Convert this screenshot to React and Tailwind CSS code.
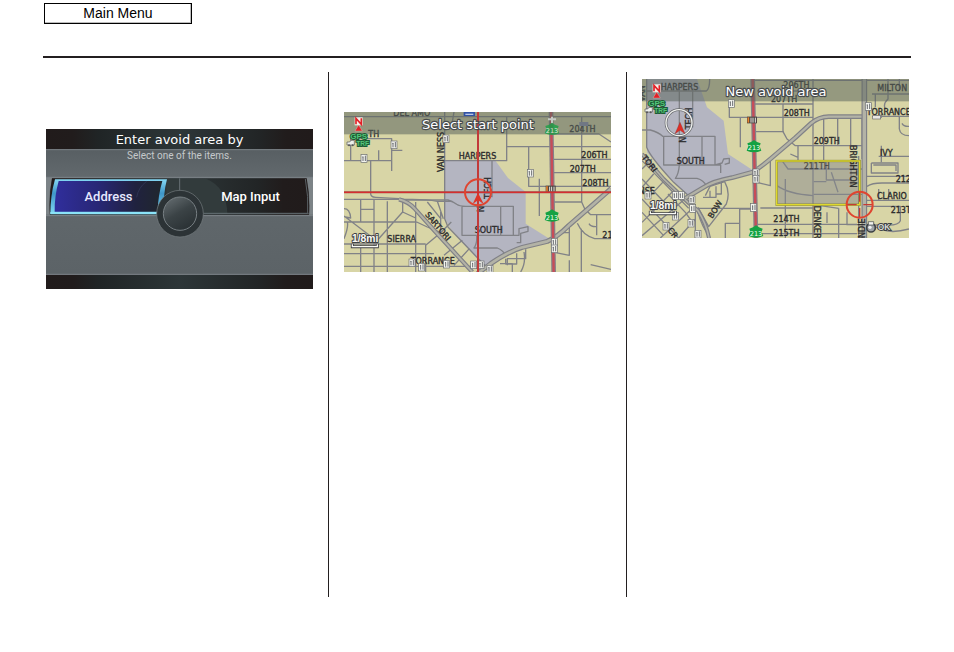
import React from "react";

const MAP_FONT = "font-['Liberation_Sans',Arial,sans-serif] font-bold";
const LABEL_FONT = "font-['DejaVu_Sans',Verdana,sans-serif]";

function Roads({ d, width = 4, color = "#818287" }) {
  return <path d={d} fill="none" stroke={color} strokeWidth={width} strokeLinejoin="round" />;
}

/* Wide road with a pale centre */
function MainRoad({ d, width = 13 }) {
  return (
    <>
      <Roads d={d} width={width} color="#808187" />
      <Roads d={d} width={width - 7} color="#b3b3a6" />
    </>
  );
}

function Label({ x, y, rotate = 0, children }) {
  return (
    <text
      x={x}
      y={y}
      transform={`rotate(${rotate} ${x} ${y})`}
      className={`${LABEL_FONT} text-[24px]`}
      fill="#2b2a2c"
      stroke="#2b2a2c"
      strokeWidth="1"
    >
      {children}
    </text>
  );
}

function Title({ x, y, children }) {
  return (
    <text
      x={x}
      y={y}
      textAnchor="middle"
      className={`${LABEL_FONT} text-[39px]`}
      fill="#ffffff"
      stroke="#484c4e"
      strokeWidth="7"
      strokeLinejoin="round"
      paintOrder="stroke"
    >
      {children}
    </text>
  );
}

/* Traffic incident marker */
function Marker({ x, y }) {
  return (
    <g transform={`translate(${x} ${y})`}>
      <rect x="-9" y="-11" width="18" height="23" fill="#f3f4ef" stroke="#6a6d70" strokeWidth="2" />
      <path d="M-3 -5V8M4 -8V8M-5 -4H-2" stroke="#6a6d70" strokeWidth="3" fill="none" />
    </g>
  );
}

function Construction({ x, y }) {
  return (
    <g transform={`translate(${x} ${y})`}>
      <rect x="-15" y="-10" width="30" height="20" fill="#4a4340" />
      <path d="M-11 -8V8" stroke="#e8812c" strokeWidth="5" />
      <path d="M-3 -7V8M3 -7V8M10 -7V8" stroke="#e9e9e4" strokeWidth="3" />
    </g>
  );
}

function Shield({ x, y, dim }) {
  return (
    <g transform={`translate(${x} ${y})`} opacity={dim ? 0.75 : 1}>
      <path d="M0 -20L9 -14L20 -10L17 -1L22 12Q0 22 -22 12L-17 -1L-20 -10L-9 -14Z" fill="#15a243" />
      <text y="11" textAnchor="middle" className={`${LABEL_FONT} text-[20px]`} fill="#f2fff2">
        213
      </text>
    </g>
  );
}

/* Compass, satellite and traffic status */
function Status({ x, y }) {
  return (
    <g transform={`translate(${x} ${y})`} className={MAP_FONT}>
      <rect x="-12" y="-34" width="24" height="24" fill="#f6efe9" />
      <path d="M-8 -13V-31L8 -13V-31" fill="none" stroke="#e32027" strokeWidth="5" />
      <path d="M0 -11L11 7H-11Z" fill="#e32027" stroke="#f0d8d0" strokeWidth="1" />
      <g fill="#54c47a" stroke="#1c5a33" strokeWidth="6" paintOrder="stroke" textAnchor="middle">
        <text x="0" y="30" className="text-[24px]">GPS</text>
        <text x="12" y="53" className="text-[20px]">TRF</text>
      </g>
      <path d="M-35 40H-27L-23 35H-13V49H-35Z" fill="#edf0ec" stroke="#555" strokeWidth="2" />
      <circle cx="-29" cy="50" r="3" fill="#555" />
      <circle cx="-18" cy="50" r="3" fill="#555" />
    </g>
  );
}

function Scale({ x, y }) {
  return (
    <g transform={`translate(${x} ${y})`}>
      <text
        className={`${MAP_FONT} text-[31px]`}
        fill="#fafaf5"
        stroke="#404246"
        strokeWidth="6"
        strokeLinejoin="round"
        paintOrder="stroke"
      >
        1/8mi
      </text>
      <path d="M1 4V13H76V4" fill="none" stroke="#404246" strokeWidth="9" />
      <path d="M1 6V13H76V6" fill="none" stroke="#fafaf5" strokeWidth="4" />
    </g>
  );
}

function StartMap() {
  return (
    <svg viewBox="0 0 801 480" className="block w-full" role="img" aria-label="Select start point">
      <rect width="801" height="480" fill="#d8d5a6" />
      <path
        d="M303 147H455L492 198L545 240V335L622 384L510 412L420 465L375 412L320 350L303 320Z"
        fill="#b4b5c1"
      />
      <Roads d="M0 14H801M302 0V320L312 345L376 412L430 468M0 146H143M20 146V80H143V177M143 115H175M104 115V146M80 148V240Q78 256 95 256L165 260L185 264H312Q330 270 338 277Q346 283 365 283H508V370H354V283M330 0L325 30M303 146H488V14M488 104H801M554 104V223H801M713 12V270H630M630 142H801M630 182H801M620 66H765L801 90M444 148V256M586 200V312M470 283V370M508 370H525V350L552 344V358L530 364V392H518M398 370Q400 395 390 408H460Q478 415 486 432M713 270L722 290L740 308H801" />
      <Roads d="M0 262H205M50 262V330M90 262V480M50 292H90M0 330H218M130 268V480M176 264V300L215 318M215 270V480M0 396H245M0 425H270M0 463H400M50 400V480M10 330Q14 345 0 380M0 290Q18 290 20 318L0 314M0 312L90 380M205 262Q250 262 280 268L298 320M250 270L292 322M280 268H325M322 330L290 362L245 400V480M355 385L300 430M290 362V300M376 410L330 460M218 330L250 345L290 362M176 300L90 396M676 342V430L635 422M676 362H648M712 350V480M700 334Q716 370 752 380H801M735 335Q740 345 758 344M758 308V370M676 445V480M740 458L801 472M545 412V440H490V460M485 440V456H518V424M468 455H505V480M540 420Q546 455 530 480" />
      <MainRoad width={13} d="M165 262Q195 270 212 290L275 360L330 420L385 480" />
      <MainRoad width={15} d="M400 485L440 455Q490 420 535 406L610 388Q640 375 675 340L750 275L801 230" />
      <path d="M621 0L629 480" stroke="#858188" strokeWidth="14" />
      <path d="M621 0L629 480" stroke="#c84c58" strokeWidth="7" />

      <Label x={148} y={13}>DEL AMO</Label>
      <Label x={73} y={76}>TH</Label>
      <Label x={676} y={59}>204TH</Label>
      <rect width="801" height="67" fill="#5c665e" fillOpacity=".56" />
      <rect x="359" y="0" width="34" height="12" fill="#3152a5" />
      <path d="M364 7H388" stroke="#b9c6e4" strokeWidth="4" />
      <Label x={300} y={180} rotate={-90}>VAN NESS</Label>
      <Label x={344} y={142}>HARPERS</Label>
      <Label x={712} y={139}>206TH</Label>
      <Label x={677} y={180}>207TH</Label>
      <Label x={715} y={221}>208TH</Label>
      <Label x={421} y={300} rotate={-90}>N</Label>
      <Label x={440} y={260} rotate={-90}>TECH</Label>
      <Label x={392} y={364}>SOUTH</Label>
      <Label x={242} y={308} rotate={50}>SARTORI</Label>
      <Label x={130} y={390}>SIERRA</Label>
      <Label x={200} y={456}>TORRANCE</Label>
      <Label x={775} y={379}>21</Label>

      <Marker x={150} y={98} />
      <Marker x={60} y={139} />
      <Marker x={306} y={80} />
      <Marker x={559} y={183} />
      <rect x="706" y="30" width="27" height="12" fill="#707784" />
      <path d="M612 22H636M624 14V34" stroke="#c5cac4" strokeWidth="6" />
      <Marker x={631} y={390} />
      <Marker x={631} y={410} />
      <Marker x={204} y={452} />
      <Marker x={233} y={465} />
      <Marker x={308} y={456} />
      <Marker x={389} y={458} />
      <Marker x={411} y={458} />
      <Marker x={438} y={471} />
      <Shield x={624} y={52} dim />
      <Shield x={624} y={312} />
      <Construction x={620} y={231} />

      <path d="M402 0V480M0 241H801" stroke="#a94a46" strokeWidth="6" />
      <path d="M402 0V480M0 241H801" stroke="#dc2a2c" strokeWidth="3" />
      <circle cx="402" cy="241" r="39" fill="none" stroke="#df4530" strokeWidth="6" />
      <path d="M402 242L419 276L402 265L386 276Z" fill="#df3427" />
      <Status x={44} y={50} />
      <Scale x={24} y={391} />
      <Title x={402} y={51}>Select start point</Title>
    </svg>
  );
}

function AreaMap() {
  return (
    <svg viewBox="0 0 801 477" className="block w-full" role="img" aria-label="New avoid area">
      <rect width="801" height="477" fill="#d8d5a6" />
      <path
        d="M12 0H165L195 85L245 125L258 225L335 275L225 302L140 352L95 310L15 220Z"
        fill="#b4b5c1"
      />
      <Roads d="M14 0V205Q25 235 95 310L145 355M14 36H193Q203 30 203 0M112 36V172M152 36V145M0 153H25Q50 160 62 172H219V258H65V172M112 172V258M180 172V258M219 258H236V282M219 258L240 252L245 240L262 238V252L248 256M112 258Q110 285 100 298H165Q185 303 194 322M262 70V115H333M295 115V205M333 75H513M333 115H513M340 158H425M385 240V320L345 310" />
      <Roads d="M345 36H513M333 4H801M423 75V158L435 180L460 200H660M468 200V245M513 0V477M545 113V245M587 113V200M626 113V200M660 113V240M690 45H801M738 0V60Q722 75 730 90M700 45V85M772 0V36M695 115H718V104M772 112V150Q775 170 801 170M780 133Q785 143 801 142M710 232H801M718 200V250M445 225L468 235M690 112H801" />
      <Roads d="M420 245L438 270H660M430 300V477M355 387H513M405 320Q440 345 513 350M515 346H660M553 245V303H628M515 308H553M568 280L588 340M627 245V320M345 436H645M345 464H645M555 400V432M535 380L590 388M590 388V477M615 400V437H680M688 252H768V282H688V252M694 258H762V276M675 292H801M675 322Q690 312 720 312H801M710 330V362M740 330V362M675 364H801M675 382H775V425Q770 438 740 438H685M690 436Q730 470 801 450M293 390V477M345 390H293M250 477V433H293" />
      <Roads d="M190 350L204 322L248 308Q266 340 253 375L200 443L168 385M183 355H222V322M204 335V355M238 312V345H222M168 388H333M0 245L140 388M0 300L110 415M0 360L65 430L110 477M0 400L65 470M0 430L90 340M0 470L140 350M55 477L160 380M110 477L160 420M35 285L0 325M62 310L25 350M168 400Q178 440 205 477M160 395V477M0 270L30 240M78 345L130 400L155 435" />
      <MainRoad width={12} d="M0 225L65 300L140 372L168 395Q193 435 201 477" />
      <MainRoad width={14} d="M130 358L183 326Q215 306 270 296L333 279Q355 265 385 240L460 176L508 132Q530 114 560 113H672" />
      <MainRoad width={17} d="M667 0V477" />
      <Roads d="M650 231V477" />
      <path d="M332 0L342 477" stroke="#858188" strokeWidth="14" />
      <path d="M332 0L342 477" stroke="#c84c58" strokeWidth="7" />

      <Label x={56} y={34}>HARPERS</Label>
      <Label x={424} y={28}>206TH</Label>
      <Label x={387} y={70}>207TH</Label>
      <Label x={706} y={36}>MILTON</Label>
      <Label x={9} y={68} rotate={-90}>VAN</Label>
      <rect width="801" height="67" fill="#5c665e" fillOpacity=".54" />
      <Label x={425} y={111}>208TH</Label>
      <Label x={515} y={195}>209TH</Label>
      <Label x={674} y={108}>TORRANCE</Label>
      <Label x={714} y={230}>IVY</Label>
      <Label x={131} y={191} rotate={-90}>N</Label>
      <Label x={151} y={151} rotate={-90}>TECH</Label>
      <Label x={104} y={255}>SOUTH</Label>
      <Label x={-2} y={236} rotate={52}>TORI</Label>
      <Label x={-10} y={346}>NSE</Label>
      <Label x={211} y={420} rotate={-58}>BOW</Label>
      <Label x={76} y={454} rotate={52}>CR</Label>
      <Label x={394} y={430}>214TH</Label>
      <Label x={394} y={472}>215TH</Label>
      <Label x={515} y={380} rotate={90}>DENKER</Label>
      <Label x={668} y={477} rotate={-90}>NDIE</Label>
      <Label x={761} y={310}>212</Label>
      <Label x={705} y={359}>CLARIO</Label>
      <Label x={746} y={401}>213T</Label>

      <rect x="404" y="246" width="249" height="131" fill="#85878c" fillOpacity=".5" />
      <g opacity=".7">
        <Label x={485} y={270}>211TH</Label>
      </g>
      <Label x={624} y={198} rotate={90}>BRIGHTON</Label>
      <rect x="404" y="246" width="249" height="131" fill="none" stroke="#8d8b3c" strokeWidth="7" />
      <rect x="404" y="246" width="249" height="131" fill="none" stroke="#dfd92c" strokeWidth="4" />

      <Marker x={268} y={73} />
      <Marker x={679} y={82} />
      <Marker x={342} y={281} />
      <Marker x={342} y={300} />
      <Marker x={335} y={385} />
      <Marker x={100} y={349} />
      <Marker x={118} y={349} />
      <Marker x={150} y={362} />
      <Marker x={152} y={388} />
      <Marker x={100} y={411} />
      <Marker x={147} y={432} />
      <Marker x={72} y={441} />
      <Marker x={168} y={465} />
      <Marker x={18} y={348} />
      <rect x="692" y="110" width="24" height="10" fill="#e8e8e4" stroke="#666" strokeWidth="2" />
      <Construction x={330} y={123} />
      <Shield x={336} y={203} />
      <Shield x={342} y={459} />

      <circle cx="111" cy="131" r="39" fill="none" stroke="#67696c" strokeWidth="8" />
      <circle cx="111" cy="131" r="39" fill="none" stroke="#f0f1ef" strokeWidth="4" />
      <path d="M114 130L129 164L114 154L99 164Z" fill="#e02d25" stroke="#7c3134" strokeWidth="1" />
      <path d="M614 377H644M664 377H692M653 339V368M653 387V415" stroke="#c53a35" strokeWidth="4" />
      <circle cx="653" cy="377" r="39" fill="none" stroke="#df4530" strokeWidth="6" />
      <Status x={44} y={50} />
      <Scale x={24} y={391} />
      <g transform="translate(687 446)">
        <circle r="13" fill="#9da2a6" stroke="#3e4245" strokeWidth="5" />
        <path d="M-8 -18H8V-8H-8Z" fill="#f2f2ee" stroke="#3e4245" strokeWidth="2" />
        <circle cx="-3" cy="-1" r="5" fill="#eef0f0" />
        <text
          x="20"
          y="8"
          className={`${MAP_FONT} text-[25px]`}
          fill="#d8dad5"
          stroke="#3e4245"
          strokeWidth="6"
          paintOrder="stroke"
        >
          OK
        </text>
      </g>
      <Title x={402} y={51}>New avoid area</Title>
    </svg>
  );
}

function PanelBackdrop() {
  return (
    <svg viewBox="18 15 801 480" preserveAspectRatio="none" className="absolute inset-0 h-full w-full" aria-hidden="true">
      <defs>
        <linearGradient id="bar">
          <stop offset="0" stopColor="#211b1b" />
          <stop offset=".1" stopColor="#211c1c" />
          <stop offset=".2" stopColor="#202526" />
          <stop offset=".5" stopColor="#2d3638" />
          <stop offset=".8" stopColor="#222526" />
          <stop offset=".9" stopColor="#211c1c" />
          <stop offset="1" stopColor="#211b1b" />
        </linearGradient>
        <linearGradient id="body" x2="0" y2="1">
          <stop offset="0" stopColor="#50575b" />
          <stop offset=".3" stopColor="#62696d" />
          <stop offset="1" stopColor="#5b6266" />
        </linearGradient>
        <linearGradient id="blue">
          <stop offset="0" stopColor="#302e9c" />
          <stop offset=".4" stopColor="#282776" />
          <stop offset=".75" stopColor="#20223f" />
          <stop offset="1" stopColor="#20272d" />
        </linearGradient>
        <linearGradient id="edge" x2="0" y2="1">
          <stop offset="0" stopColor="#85d8f4" />
          <stop offset=".4" stopColor="#3f97c9" />
          <stop offset="1" stopColor="#82dcf5" />
        </linearGradient>
        <linearGradient id="dial" x2=".6" y2="1">
          <stop offset="0" stopColor="#6a7276" />
          <stop offset=".55" stopColor="#3b4346" />
          <stop offset="1" stopColor="#2b3235" />
        </linearGradient>
      </defs>
      <rect x="18" y="15" width="801" height="480" fill="url(#body)" />
      <rect x="18" y="15" width="801" height="61" fill="url(#bar)" />
      <rect x="18" y="452" width="801" height="43" fill="url(#bar)" />
      <path d="M18 77H819M18 451H819M18 160H819M18 275H819" stroke="#7c8388" strokeWidth="3" />
      <path d="M18 162H36Q24 215 28 272H18ZM819 162H800Q812 215 808 272H819Z" fill="#7c8387" />
      <path d="M36 163H800Q810 215 807 272H30Q26 215 36 163Z" fill="url(#bar)" />
      <path d="M379 165H500Q560 190 562 270H379Z" fill="#323b3c" />
      <path d="M419 163V207M490 268H806" stroke="#667075" strokeWidth="3" />
      <path d="M796 165Q806 218 803 270" fill="none" stroke="#596064" strokeWidth="3" />
      <path d="M45 166H381Q369 210 371 271H31Q31 215 45 166Z" fill="url(#edge)" />
      <path d="M56 171H367Q354 215 353 263H44Q43 218 56 171Z" fill="url(#blue)" />
      <path d="M31 267H370" stroke="#8be3f8" strokeWidth="6" />
      <path d="M320 172Q295 190 290 220" fill="none" stroke="#353b5d" strokeWidth="2" />
      <circle cx="420" cy="269" r="70" fill="#2c3336" stroke="#757d81" strokeWidth="2" />
      <circle cx="420" cy="269" r="50" fill="url(#dial)" stroke="#777f83" strokeWidth="3" />
    </svg>
  );
}

function AvoidAreaPanel() {
  return (
    <section className="relative aspect-[267/160] w-full text-white">
      <PanelBackdrop />
      <div className="relative">
        <h1 className={`h-5 text-center text-[13px] leading-[22px] ${LABEL_FONT}`}>
          Enter avoid area by
        </h1>
        <p className="h-[14px] text-center font-['Roboto',sans-serif] text-[10px] leading-[13px] text-[#c5c9cb]">
          Select one of the items.
        </p>
        <div className="mt-4 flex justify-between px-1 font-['Roboto',sans-serif] text-[13px] font-medium">
          <button type="button" className="h-[35px] w-[117px] text-[#e6e8ff]">Address</button>
          <button type="button" className="h-[35px] w-[117px]">Map Input</button>
        </div>
      </div>
    </section>
  );
}

export default function App() {
  return (
    <main className="bg-white pb-[55px]">
      <header className="mx-[43px] h-[58px] border-b-2 border-[#231f20] pt-[3px] pl-px">
        <button
          type="button"
          className="block h-[21px] w-[148px] border border-black bg-white font-['Liberation_Sans',Arial,sans-serif] text-sm leading-[19px] text-black shadow-[inset_-1px_-1px_0_#bdbdbd]"
        >
          Main Menu
        </button>
      </header>
      <div className="mt-[14px] grid min-h-[525px] grid-cols-3 px-[30px]">
        <div className="border-l border-transparent px-[15px] pt-[57px]">
          <AvoidAreaPanel />
        </div>
        <div className="border-l border-[#231f20] px-[15px] pt-10">
          <StartMap />
        </div>
        <div className="border-l border-[#231f20] px-[15px] pt-[7px]">
          <AreaMap />
        </div>
      </div>
    </main>
  );
}
